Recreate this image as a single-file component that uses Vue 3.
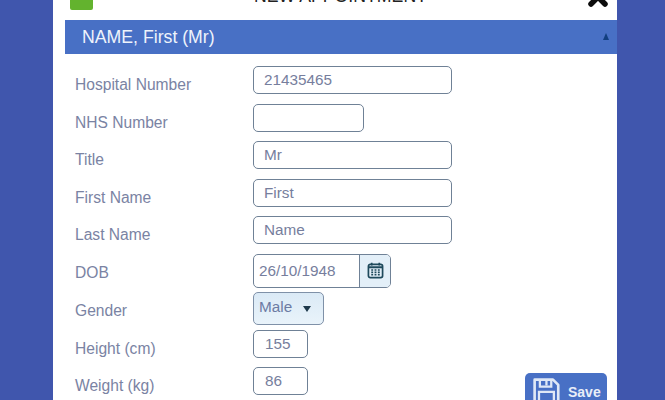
<script setup>
const rows = [
  { label: 'Hospital Number', value: '21435465', size: 'wide' },
  { label: 'NHS Number', value: '', size: 'mid' },
  { label: 'Title', value: 'Mr', size: 'wide' },
  { label: 'First Name', value: 'First', size: 'wide' },
  { label: 'Last Name', value: 'Name', size: 'wide' }
]
</script>

<template>
  <div class="page">
    <div class="panel">
      <header class="top">
        <span class="logo"></span>
        <span class="title">NEW APPOINTMENT</span>
        <svg class="close" viewBox="0 0 20 20" aria-hidden="true">
          <path d="M3 3L17 17M17 3L3 17" stroke="#0c0c0c" stroke-width="5.500" stroke-linecap="round" />
        </svg>
      </header>

      <div class="band">
        <span>NAME, First (Mr)</span>
        <i class="up"></i>
      </div>

      <div class="form">
        <div v-for="r in rows" :key="r.label" class="row">
          <span class="label">{{ r.label }}</span>
          <div class="box" :class="r.size">{{ r.value }}</div>
        </div>

        <div class="row dob">
          <span class="label">DOB</span>
          <div class="date">
            <span class="date-text">26/10/1948</span>
            <span class="cal">
              <svg viewBox="0 0 18 18" width="17" height="17" aria-hidden="true">
                <rect x="1.500" y="2.500" width="15" height="14" rx="2" fill="none" stroke="#1f4a5c" stroke-width="1.800" />
                <path d="M1.500 5.500h15" stroke="#1f4a5c" stroke-width="2.200" />
                <path d="M5 .8v3M13 .8v3" stroke="#1f4a5c" stroke-width="1.800" />
                <path d="M4.500 8.500h9M4.500 11h9M4.500 13.500h9" stroke="#1f4a5c" stroke-width="1.700" stroke-dasharray="2 1.500" />
              </svg>
            </span>
          </div>
        </div>

        <div class="row gender">
          <span class="label">Gender</span>
          <div class="select">
            <span>Male</span>
            <i class="down"></i>
          </div>
        </div>

        <div class="row">
          <span class="label">Height (cm)</span>
          <div class="box small">155</div>
        </div>

        <div class="row last">
          <span class="label">Weight (kg)</span>
          <div class="box small">86</div>
          <button class="save" type="button">
            <svg viewBox="0 0 32 32" width="28" height="28" aria-hidden="true">
              <path d="M3 3h21l6 6v20H3z" fill="none" stroke="#dfe8f6" stroke-width="3" stroke-linejoin="round" />
              <path d="M9 3v8h13V3M16.500 4.500v5" fill="none" stroke="#dfe8f6" stroke-width="2.600" />
              <path d="M8 29V17h17v12" fill="none" stroke="#dfe8f6" stroke-width="2.600" />
            </svg>
            <span>Save</span>
          </button>
        </div>
      </div>
    </div>
  </div>
</template>

<style scoped>
.page {
  width: 665px;
  height: 400px;
  overflow: hidden;
  background: #4056ad;
  font-family: "Liberation Sans", Arial, sans-serif;
}
.panel {
  width: 564px;
  height: 400px;
  margin-left: 53px;
  background: #fff;
  overflow: hidden;
}
.top {
  height: 20px;
  display: flex;
  position: relative;
  overflow: hidden;
}
.logo {
  width: 23px;
  height: 10px;
  margin-left: 17px;
  background: #63b32e;
  border-radius: 0 0 2px 2px;
}
.title {
  position: absolute;
  left: 201px;
  top: -14px;
  font-size: 17.7px;
  line-height: 20px;
  color: #222;
  white-space: nowrap;
}
.close {
  position: absolute;
  left: 535px;
  top: -13px;
  width: 20px;
  height: 20px;
}
.band {
  height: 34px;
  margin-left: 12px;
  padding: 0 8px 0 17px;
  display: flex;
  align-items: center;
  justify-content: space-between;
  background: #4870c5;
  color: #eef3fb;
  font-size: 17.7px;
}
.up {
  width: 0;
  height: 0;
  border-left: 3.5px solid transparent;
  border-right: 3.5px solid transparent;
  border-bottom: 7px solid #123f80;
  margin-bottom: 1px;
}
.form {
  padding: 12px 10px 0 22px;
}
.row {
  display: flex;
  align-items: flex-start;
  height: 37.5px;
}
.label {
  width: 178px;
  padding-top: 10px;
  font-size: 15.6px;
  line-height: 18px;
  color: #7a83a3;
  white-space: nowrap;
}
.box {
  box-sizing: border-box;
  height: 28px;
  padding: 0 10px;
  border: 1px solid #6f8196;
  border-radius: 5px;
  font-size: 15.3px;
  line-height: 25px;
  color: #767e9d;
}
.wide { width: 199px; }
.mid { width: 111px; }
.small { width: 55px; padding: 0 11px; }
.dob { height: 38px; }
.date {
  box-sizing: border-box;
  display: flex;
  width: 138px;
  height: 34px;
  border: 1px solid #6f8196;
  border-radius: 5px;
  overflow: hidden;
}
.date-text {
  box-sizing: border-box;
  width: 106px;
  padding-left: 5px;
  border-right: 1px solid #6f8196;
  font-size: 15.3px;
  line-height: 31px;
  color: #767e9d;
  white-space: nowrap;
}
.cal {
  flex: 1;
  display: flex;
  align-items: center;
  justify-content: center;
  background: #e3eff8;
}
.gender { height: 38px; }
.select {
  box-sizing: border-box;
  display: flex;
  align-items: flex-start;
  gap: 11px;
  width: 71px;
  height: 33px;
  padding: 5px 0 0 5px;
  border: 1px solid #7f91a8;
  border-radius: 5px;
  background: linear-gradient(#dbeaf6, #e9f3fa);
  font-size: 15.3px;
  line-height: 18px;
  color: #6c7ba3;
}
.down {
  width: 0;
  height: 0;
  margin-top: 8px;
  border-left: 4px solid transparent;
  border-right: 4px solid transparent;
  border-top: 6px solid #1f3a4c;
}
.last { position: relative; }
.save {
  margin-left: auto;
  margin-top: 6px;
  display: flex;
  align-items: flex-start;
  gap: 8px;
  width: 82px;
  height: 40px;
  padding: 4px 0 0 7px;
  border: 0;
  border-radius: 5px;
  background: #4870c5;
  color: #e8eef8;
  font-family: inherit;
  font-size: 14px;
  font-weight: bold;
  line-height: 30px;
}
</style>
